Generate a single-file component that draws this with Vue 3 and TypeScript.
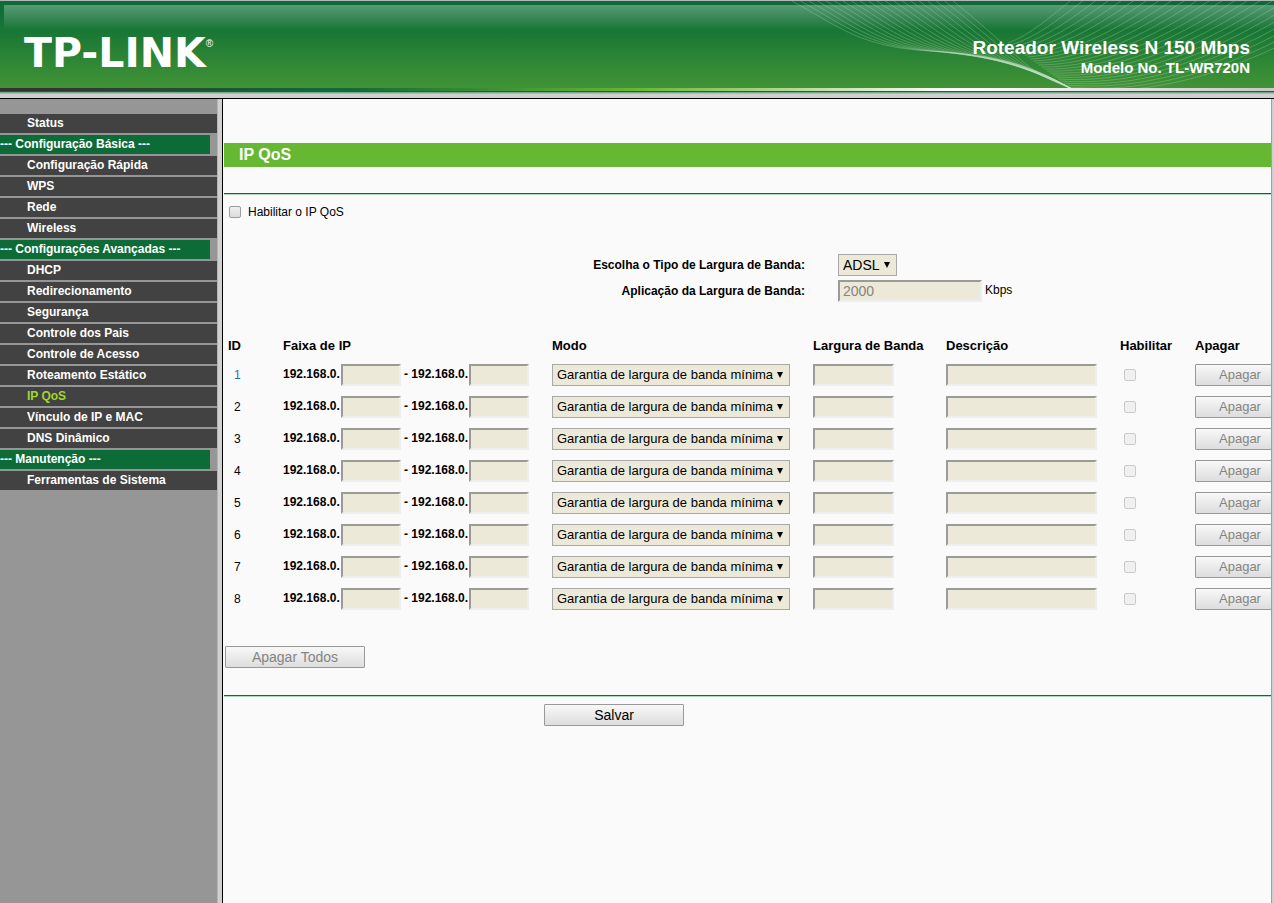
<script setup lang="ts">
import { ref } from 'vue'

interface MenuEntry {
  label: string
  heading?: boolean
  active?: boolean
}

const menu: MenuEntry[] = [
  { label: 'Status' },
  { label: '--- Configuração Básica ---', heading: true },
  { label: 'Configuração Rápida' },
  { label: 'WPS' },
  { label: 'Rede' },
  { label: 'Wireless' },
  { label: '--- Configurações Avançadas ---', heading: true },
  { label: 'DHCP' },
  { label: 'Redirecionamento' },
  { label: 'Segurança' },
  { label: 'Controle dos Pais' },
  { label: 'Controle de Acesso' },
  { label: 'Roteamento Estático' },
  { label: 'IP QoS', active: true },
  { label: 'Vínculo de IP e MAC' },
  { label: 'DNS Dinâmico' },
  { label: '--- Manutenção ---', heading: true },
  { label: 'Ferramentas de Sistema' },
]

const enabled = ref(false)
const rules = [1, 2, 3, 4, 5, 6, 7, 8]
const prefix = '192.168.0.'

// Each fan is a family of curves blended between its two outermost members.
function fan(from: number[], to: number[], count: number): string[] {
  return Array.from({ length: count }, (_, i) => {
    const t = i / (count - 1)
    const p = from.map((v, k) => (v + (to[k] - v) * t).toFixed(1))
    const start = `M${p[0]} ${p[1]} C${p.slice(2, 8).join(' ')}`
    return p.length > 8 ? `${start} S${p.slice(8).join(' ')}` : start
  })
}
const waves = [
  ...fan(
    [12, 0, 60, 26, 80, 46, 150, 50, 250, 64, 292, 88],
    [173, 0, 198, 20, 220, 40, 240, 58, 274, 80, 292, 88],
    20,
  ),
  ...fan([228, 42, 250, 34, 270, 16, 290, 0], [292, 88, 380, 96, 470, 70, 590, -6], 24),
]
</script>

<template>
  <div class="page">
    <header class="banner">
      <svg class="waves" viewBox="0 0 494 87" width="494" height="87" aria-hidden="true">
        <path v-for="d in waves" :key="d" :d="d" />
      </svg>
      <div class="logo">TP-LINK<sup>®</sup></div>
      <div class="product">
        <div class="name">Roteador Wireless N 150 Mbps</div>
        <div class="model">Modelo No. TL-WR720N</div>
      </div>
    </header>
    <div class="strip"></div>
    <div class="frames">
      <nav class="side">
        <ul>
          <li v-for="m in menu" :key="m.label" :class="{ heading: m.heading }">
            <span v-if="m.heading">{{ m.label }}</span>
            <a v-else href="#" :class="{ active: m.active }">{{ m.label }}</a>
          </li>
        </ul>
      </nav>
      <main class="content">
        <h1>IP QoS</h1>
        <form @submit.prevent>
          <div class="rule"></div>
          <label class="enable"><input v-model="enabled" type="checkbox" />Habilitar o IP QoS</label>
          <div class="band">
            <label for="type">Escolha o Tipo de Largura de Banda:</label>
            <div><span class="pick"><select id="type"><option>ADSL</option></select></span></div>
            <label for="rate">Aplicação da Largura de Banda:</label>
            <div class="rate"><input id="rate" class="box" type="text" value="2000" disabled /><span>Kbps</span></div>
          </div>
          <table>
            <colgroup>
              <col class="c-id" /><col class="c-ip" /><col class="c-mode" /><col class="c-band" />
              <col class="c-desc" /><col class="c-on" /><col class="c-del" />
            </colgroup>
            <thead>
              <tr>
                <th>ID</th><th>Faixa de IP</th><th>Modo</th><th>Largura de Banda</th>
                <th>Descrição</th><th>Habilitar</th><th>Apagar</th>
              </tr>
            </thead>
            <tbody>
              <tr v-for="n in rules" :key="n">
                <td class="id" :class="{ first: n === 1 }">{{ n }}</td>
                <td>
                  <div class="range">
                    <b>{{ prefix }}</b><input class="box" type="text" :aria-label="`Início ${n}`" disabled />
                    <b class="to">- {{ prefix }}</b><input class="box" type="text" :aria-label="`Fim ${n}`" disabled />
                  </div>
                </td>
                <td>
                  <span class="pick mode"><select :aria-label="`Modo ${n}`"><option>Garantia de largura de banda mínima</option></select></span>
                </td>
                <td><input class="box band-in" type="text" :aria-label="`Largura de Banda ${n}`" disabled /></td>
                <td><input class="box desc-in" type="text" :aria-label="`Descrição ${n}`" disabled /></td>
                <td><input class="on" type="checkbox" :aria-label="`Habilitar ${n}`" disabled /></td>
                <td><button class="del" type="button" disabled>Apagar</button></td>
              </tr>
            </tbody>
          </table>
          <button class="wide all" type="button" disabled>Apagar Todos</button>
          <div class="rule"></div>
          <div class="save"><button class="wide" type="submit">Salvar</button></div>
        </form>
      </main>
    </div>
  </div>
</template>

<style>
body {
  margin: 0;
  background: #fafafa;
}
</style>

<style scoped>
.page {
  display: flex;
  flex-direction: column;
  min-height: 100vh;
  font: 12px/16px "Liberation Sans", Arial, sans-serif;
  color: #000;
  overflow: hidden;
}
.banner {
  position: relative;
  display: flex;
  justify-content: space-between;
  box-sizing: border-box;
  height: 88px;
  border-top: 1px solid #b5b5b5;
  background:
    linear-gradient(#0c6b36, #0c6b36) 0 0 / 100% 4px no-repeat,
    linear-gradient(#0c6b36, #187635) 0 0 / 4px 28px no-repeat,
    linear-gradient(#589a75 4px, #187635 29px, #419336 87px);
}
.waves {
  position: absolute;
  top: 0;
  right: 0;
}
.waves path {
  fill: none;
  stroke: #c8e4c8;
  stroke-opacity: 0.28;
}
.logo {
  position: relative;
  display: flex;
  padding: 28px 0 0 24px;
  color: #fff;
  font: bold 41px/48px "DejaVu Sans", sans-serif;
}
.logo sup {
  padding-top: 10px;
  font: 10px/10px "Liberation Sans", Arial, sans-serif;
}
.product {
  position: relative;
  padding: 35px 24px 0 0;
  color: #fff;
  font-weight: bold;
  text-align: right;
}
.name {
  font-size: 19px;
  line-height: 24px;
}
.model {
  font-size: 15px;
  line-height: 16px;
}
.strip {
  box-sizing: border-box;
  height: 11px;
  border-bottom: 1px solid #000;
  background:
    linear-gradient(90deg, #333 0, #333 4%, #0c6b36 25%, #0c6b36 27%, #66b832 50%, #fff 75%, #c8c8c8 100%) 0 0 / 100% 3px no-repeat,
    linear-gradient(transparent 3px, #0c6b36 3px, #0c6b36 4px, #7aa78c 4px, #7aa78c 5px, #b5b5b5 5px, #b5b5b5 6px, #d0d0d0 6px);
}
.frames {
  display: flex;
  flex: 1;
}
.side {
  flex: 0 0 217px;
  background: #969696;
  border-right: 1px solid #b4b4b4;
  box-shadow: 4px 0 #d0d0d0, 5px 0 #000;
}
.side ul {
  display: flex;
  flex-direction: column;
  gap: 2px;
  margin: 0;
  padding: 15px 0 0;
  list-style: none;
}
.side li {
  height: 19px;
  padding-left: 27px;
  background: #424242;
  color: #fff;
  font-weight: bold;
  line-height: 18px;
}
.side li.heading {
  margin-right: 7px;
  padding-left: 0;
  background: #0c6b36;
}
.side a {
  color: #fff;
  text-decoration: none;
}
.side a.active {
  color: #a2d729;
}
.content {
  flex: 1;
  min-width: 0;
  margin-left: 6px;
  padding-top: 44px;
  overflow: hidden;
  background: #fafafa;
  border-right: 1px solid #a0a0a0;
  box-shadow: 2px 0 #d0d0d0;
  margin-right: 2px;
}
h1 {
  margin: 0 0 26px;
  padding-left: 15px;
  background: #66b832;
  color: #fff;
  font-size: 16px;
  line-height: 24px;
}
.rule {
  height: 1px;
  background: #0c6b36;
  border-bottom: 1px solid #b4d4c2;
}
input {
  margin: 0;
}
input[type="checkbox"] {
  appearance: none;
  box-sizing: border-box;
  width: 12px;
  height: 12px;
  border: 1px solid #9c9c9c;
  border-radius: 2px;
  background: linear-gradient(#eee, #dcdcdc);
}
input[type="checkbox"]:checked {
  background: #0c6b36;
}
input[type="checkbox"]:disabled {
  border-color: #cacaca;
  background: #f0f0f0;
}
.enable {
  display: flex;
  align-items: center;
  gap: 7px;
  margin: 9px 5px 34px;
}
.band {
  display: grid;
  grid-template-columns: 581px 1fr;
  column-gap: 33px;
  row-gap: 4px;
  align-items: center;
}
.band label {
  font-weight: bold;
  text-align: right;
}
.band > div {
  display: flex;
}
.rate {
  gap: 3px;
  line-height: 20px;
}
.box {
  box-sizing: border-box;
  width: 60px;
  height: 22px;
  padding: 1px 3px;
  border: 2px solid;
  border-color: #9a9a9a #eee #eee #9a9a9a;
  background: #ece9d8;
  color: #848484;
  font: 14px/16px "Liberation Sans", Arial, sans-serif;
}
.rate .box {
  width: 144px;
}
.pick {
  position: relative;
  display: inline-block;
  vertical-align: top;
}
.pick::after {
  content: "";
  position: absolute;
  top: 8px;
  right: 7px;
  border: 3px solid transparent;
  border-top: 6px solid #000;
  border-bottom: 0;
  pointer-events: none;
}
select {
  appearance: none;
  display: block;
  box-sizing: border-box;
  width: 59px;
  height: 22px;
  margin: 0;
  padding: 0 4px;
  border: 1px solid #a9a9a9;
  border-radius: 0;
  background: #ece9d8;
  color: #000;
  font: 14px/20px "Liberation Sans", Arial, sans-serif;
}
.mode select {
  width: 238px;
  font-size: 13px;
}
table {
  width: 1060px;
  margin-top: 36px;
  border-collapse: collapse;
  table-layout: fixed;
}
.c-id { width: 59px; }
.c-ip { width: 269px; }
.c-mode { width: 261px; }
.c-band { width: 133px; }
.c-desc { width: 174px; }
.c-on { width: 75px; }
th {
  height: 21px;
  padding: 0;
  font-size: 13px;
  text-align: left;
  vertical-align: top;
}
th:first-child {
  padding-left: 4px;
}
td {
  height: 32px;
  padding: 0;
}
td > * {
  display: block;
}
td.id {
  padding-left: 10px;
}
td.first {
  color: #1a73b8;
}
.range {
  display: flex;
  line-height: 20px;
}
.range b {
  width: 58px;
}
.range b.to {
  width: 65px;
  margin-left: 3px;
}
.band-in { width: 81px; }
.desc-in { width: 151px; }
td .on {
  margin-left: 4px;
}
button {
  height: 22px;
  padding: 0;
  border: 1px solid #999;
  border-radius: 1px;
  background: linear-gradient(#f8f8f8, #ddd);
  color: #000;
  font: 14px/20px "Liberation Sans", Arial, sans-serif;
}
button:disabled {
  color: #848484;
}
.del {
  width: 90px;
  font-size: 13px;
}
.wide {
  display: block;
  width: 140px;
}
.all {
  margin: 31px 0 27px 1px;
}
.save {
  padding: 7px 0 0 320px;
}
</style>
